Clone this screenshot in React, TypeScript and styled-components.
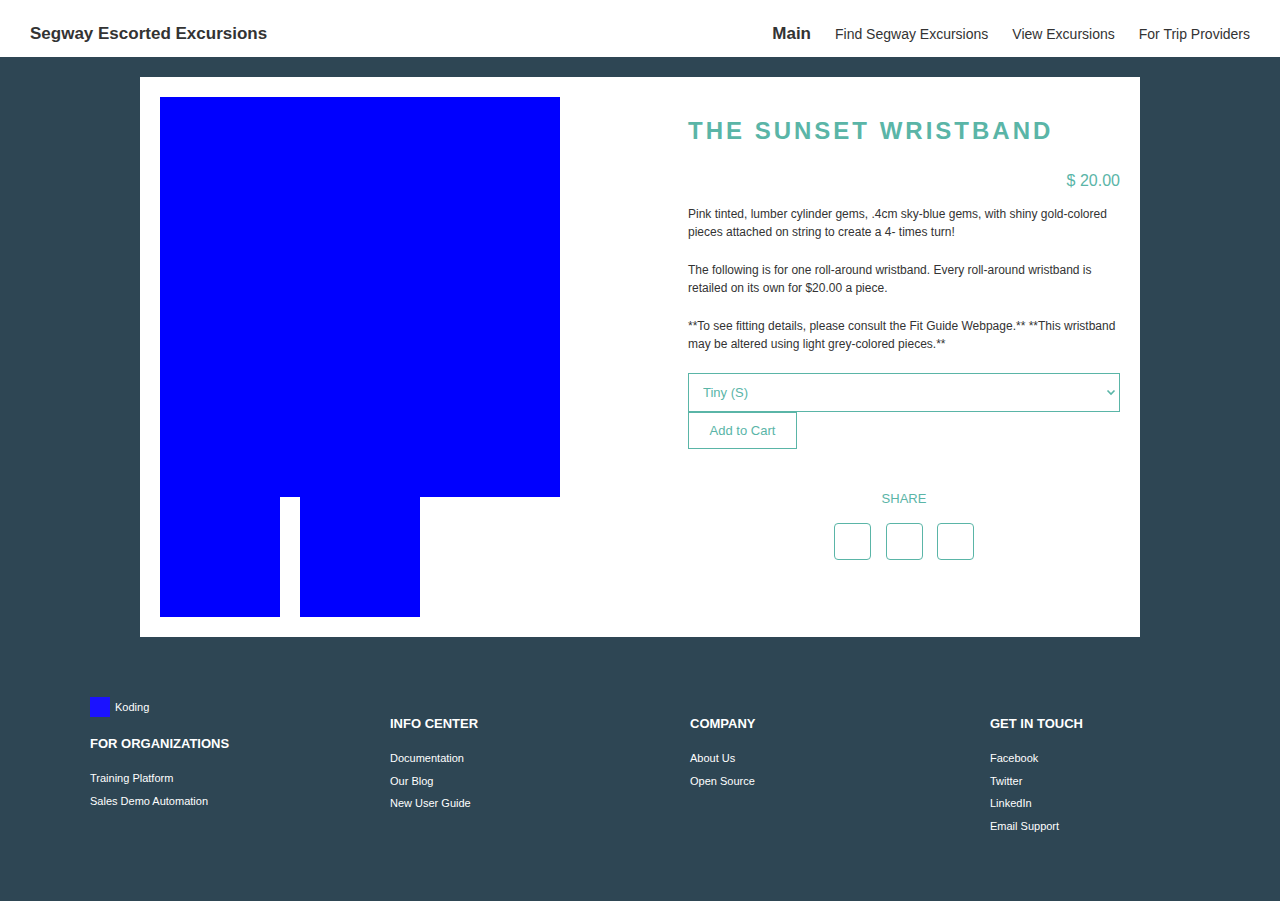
import React from "react";
import styled, { createGlobalStyle } from "styled-components";

const TEAL = "#5ab5a7";
const DARK = "#2e4654";

const GlobalStyle = createGlobalStyle`
  html, body {
    margin: 0;
    padding: 0;
    background: ${DARK};
    font-family: "Liberation Sans", Arial, Helvetica, sans-serif;
  }
  * { box-sizing: border-box; }
`;

const Header = styled.header`
  height: 57px;
  background: #fff;
  display: flex;
  align-items: center;
  justify-content: space-between;
  padding: 11px 30px 0;
`;

const Brand = styled.div`
  font-size: 17px;
  font-weight: 700;
  color: #333;
`;

const Nav = styled.nav`
  display: flex;
  align-items: center;
  gap: 24px;
`;

const NavLink = styled.a<{ $active?: boolean }>`
  color: #333;
  text-decoration: none;
  font-size: ${(p) => (p.$active ? "17px" : "14px")};
  font-weight: ${(p) => (p.$active ? 700 : 400)};
`;

const Main = styled.main`
  padding: 20px 0 0;
`;

const Card = styled.section`
  width: 1000px;
  margin: 0 auto;
  background: #fff;
  padding: 20px;
  display: flex;
  justify-content: space-between;
`;

const Gallery = styled.div`
  width: 400px;
  display: flex;
  flex-direction: column;
`;

const MainImage = styled.div`
  width: 400px;
  height: 400px;
  background: #0000ff;
`;

const Thumbs = styled.div`
  display: flex;
  gap: 20px;
`;

const Thumb = styled.div`
  width: 120px;
  height: 120px;
  background: #0000ff;
`;

const Details = styled.div`
  width: 432px;
  display: flex;
  flex-direction: column;
`;

const Title = styled.h1`
  margin: 20px 0 0;
  font-size: 24px;
  line-height: 28px;
  font-weight: 700;
  letter-spacing: 3px;
  color: ${TEAL};
  text-transform: uppercase;
`;

const Price = styled.div`
  margin-top: 26px;
  text-align: right;
  font-size: 16px;
  line-height: 20px;
  color: ${TEAL};
`;

const Description = styled.p`
  margin: 0 0 20px;
  font-size: 12px;
  line-height: 18px;
  color: #333;
  &:first-of-type {
    margin-top: 14px;
  }
`;

const SelectWrap = styled.div`
  position: relative;
  width: 100%;
`;

const SizeSelect = styled.select`
  appearance: none;
  -webkit-appearance: none;
  display: block;
  width: 100%;
  height: 39px;
  border: 1px solid ${TEAL};
  border-radius: 0;
  background: #fff;
  color: ${TEAL};
  font-family: inherit;
  font-size: 13px;
  padding: 0 14px;
  outline: none;
`;

const Chevron = styled.svg`
  position: absolute;
  right: 4px;
  top: 14px;
  width: 10px;
  height: 10px;
  pointer-events: none;
`;

const CartButton = styled.button`
  align-self: flex-start;
  height: 37px;
  width: 109px;
  padding: 0;
  border: 1px solid ${TEAL};
  background: #fff;
  color: ${TEAL};
  font-family: inherit;
  font-size: 13px;
  cursor: pointer;
`;

const Share = styled.div`
  margin-top: 42px;
  display: flex;
  flex-direction: column;
  align-items: center;
`;

const ShareLabel = styled.div`
  font-size: 13px;
  line-height: 16px;
  color: ${TEAL};
`;

const ShareRow = styled.div`
  margin-top: 16px;
  display: flex;
  gap: 14.5px;
`;

const ShareBox = styled.a`
  width: 37px;
  height: 37px;
  border: 1px solid ${TEAL};
  border-radius: 4px;
  display: block;
`;

const Footer = styled.footer`
  padding: 60px 90px 64px;
  display: grid;
  grid-template-columns: repeat(4, 300px);
  align-items: start;
`;

const FooterCol = styled.div`
  display: flex;
  flex-direction: column;
`;

const LogoRow = styled.div`
  display: flex;
  align-items: center;
  gap: 5px;
  height: 20px;
  color: #fff;
  font-size: 11px;
  line-height: 18px;
`;

const LogoMark = styled.span`
  width: 20px;
  height: 20px;
  background: #1b12ff;
  display: block;
`;

const FooterHeading = styled.h4`
  margin: 19px 0 16px;
  font-size: 13px;
  line-height: 15px;
  font-weight: 700;
  color: #fff;
  text-transform: uppercase;
`;

const FooterList = styled.ul`
  list-style: none;
  margin: 0;
  padding: 0;
`;

const FooterItem = styled.li`
  font-size: 11px;
  line-height: 22.67px;
  color: #fff;
`;

const footerCols = [
  { title: "Info Center", links: ["Documentation", "Our Blog", "New User Guide"] },
  { title: "Company", links: ["About Us", "Open Source"] },
  { title: "Get in Touch", links: ["Facebook", "Twitter", "LinkedIn", "Email Support"] },
];

export default function App() {
  return (
    <>
      <GlobalStyle />
      <Header>
        <Brand>Segway Escorted Excursions</Brand>
        <Nav>
          <NavLink $active href="#">Main</NavLink>
          <NavLink href="#">Find Segway Excursions</NavLink>
          <NavLink href="#">View Excursions</NavLink>
          <NavLink href="#">For Trip Providers</NavLink>
        </Nav>
      </Header>
      <Main>
        <Card>
          <Gallery>
            <MainImage />
            <Thumbs>
              <Thumb />
              <Thumb />
            </Thumbs>
          </Gallery>
          <Details>
            <Title>The Sunset Wristband</Title>
            <Price>$ 20.00</Price>
            <Description>
              Pink tinted, lumber cylinder gems, .4cm sky-blue gems, with shiny gold-colored pieces attached on string to create a 4- times turn!
            </Description>
            <Description>
              The following is for one roll-around wristband. Every roll-around wristband is retailed on its own for $20.00 a piece.
            </Description>
            <Description>
              **To see fitting details, please consult the Fit Guide Webpage.** **This wristband may be altered using light grey-colored pieces.**
            </Description>
            <SelectWrap>
              <SizeSelect defaultValue="s">
                <option value="s">Tiny (S)</option>
                <option value="m">Medium (M)</option>
                <option value="l">Large (L)</option>
              </SizeSelect>
              <Chevron viewBox="0 0 10 10">
                <path d="M1.5 3.5 L5 7 L8.5 3.5" fill="none" stroke={TEAL} strokeWidth="1.6" />
              </Chevron>
            </SelectWrap>
            <CartButton>Add to Cart</CartButton>
            <Share>
              <ShareLabel>SHARE</ShareLabel>
              <ShareRow>
                <ShareBox href="#" />
                <ShareBox href="#" />
                <ShareBox href="#" />
              </ShareRow>
            </Share>
          </Details>
        </Card>
      </Main>
      <Footer>
        <FooterCol>
          <LogoRow>
            <LogoMark />
            Koding
          </LogoRow>
          <FooterHeading>For Organizations</FooterHeading>
          <FooterList>
            <FooterItem>Training Platform</FooterItem>
            <FooterItem>Sales Demo Automation</FooterItem>
          </FooterList>
        </FooterCol>
        {footerCols.map((c) => (
          <FooterCol key={c.title}>
            <FooterHeading>{c.title}</FooterHeading>
            <FooterList>
              {c.links.map((l) => (
                <FooterItem key={l}>{l}</FooterItem>
              ))}
            </FooterList>
          </FooterCol>
        ))}
      </Footer>
    </>
  );
}
